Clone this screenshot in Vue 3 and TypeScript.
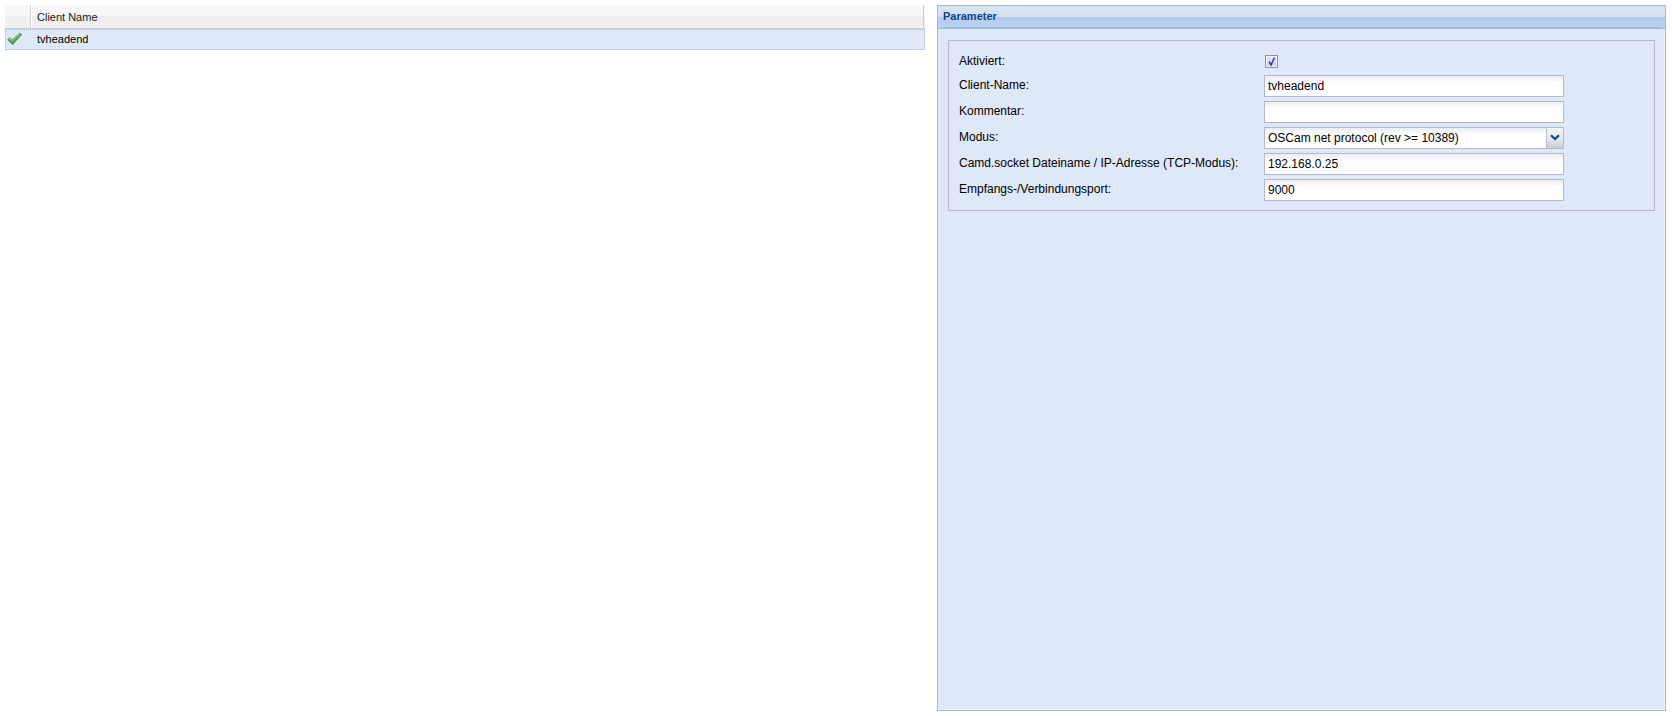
<script setup lang="ts">
interface Field {
  label: string
  value: string
  select?: boolean
}
const fields: Field[] = [
  { label: 'Client-Name:', value: 'tvheadend' },
  { label: 'Kommentar:', value: '' },
  { label: 'Modus:', value: 'OSCam net protocol (rev >= 10389)', select: true },
  { label: 'Camd.socket Dateiname / IP-Adresse (TCP-Modus):', value: '192.168.0.25' },
  { label: 'Empfangs-/Verbindungsport:', value: '9000' },
]
</script>

<template>
  <div class="page">
    <section class="grid">
      <div class="grid-head">
        <div class="hcell first"></div>
        <div class="hcell name">Client Name</div>
        <div class="hcell last"></div>
      </div>
      <div class="grid-row">
        <div class="icon-cell">
          <svg width="15" height="14" viewBox="0 0 16 15">
            <path d="M0.6 8.2 L3 6.2 L5.6 8.4 L13.4 1.4 L15.6 2.8 L6 13.6 Z" fill="#4fa651" stroke="#3d8f46" stroke-width="0.8" stroke-linejoin="round" />
            <path d="M2.2 7.8 L3 7.2 L5.6 9.4 L13.4 2.4" fill="none" stroke="#a9dfa5" stroke-width="1" />
          </svg>
        </div>
        <div class="name-cell">tvheadend</div>
      </div>
    </section>

    <section class="panel">
      <header class="panel-head">
        <div class="panel-head-inner">
          <span class="panel-title">Parameter</span>
        </div>
      </header>
      <div class="panel-body">
        <div class="fieldset">
          <div class="row check-row">
            <label class="lbl">Aktiviert:</label>
            <span class="check">
              <svg width="13" height="13" viewBox="0 0 13 13">
                <path d="M4 6.5 L6 10 L9.5 2.5" fill="none" stroke="#2f45b0" stroke-width="1.6" />
              </svg>
            </span>
          </div>
          <div v-for="f in fields" :key="f.label" class="row">
            <label class="lbl">{{ f.label }}</label>
            <div class="input" :class="{ 'has-trigger': f.select }">
              <span class="val">{{ f.value }}</span>
              <span v-if="f.select" class="trigger">
                <svg width="10" height="7" viewBox="0 0 10 7">
                  <path d="M1 1.2 L5 5 L9 1.2" fill="none" stroke="#15428b" stroke-width="2.2" />
                </svg>
              </span>
            </div>
          </div>
        </div>
      </div>
    </section>
  </div>
</template>

<style>
html, body { margin: 0; background: #fff; }
</style>

<style scoped>
.page {
  display: flex;
  gap: 12px;
  height: 716px;
  box-sizing: border-box;
  padding: 5px 6px 5px 5px;
  font: 12px/14px "Liberation Sans", Arial, sans-serif;
  color: #000;
  overflow: hidden;
}
.grid { width: 920px; flex: none; font-size: 11px; }
.grid-head {
  display: flex;
  height: 24px;
  box-sizing: border-box;
  background: linear-gradient(#f9f9f9 0%, #f7f7f7 45%, #eeeeee 50%, #f1f1f1 100%);
  border-bottom: 1px solid #d0d0d0;
}
.hcell { box-sizing: border-box; height: 23px; border-right: 1px solid #d0d0d0; }
.hcell.first { width: 26px; }
.hcell.name { width: 893px; padding: 6px 0 0 6px; color: #222; line-height: 13px; box-shadow: inset 1px 0 0 #fff; }
.hcell.last { flex: 1; border-right: 0; }
.grid-row {
  display: flex;
  height: 21px;
  box-sizing: border-box;
  background: #dfe8f6;
  border: 1px dotted #a3bae9;
}
.icon-cell { width: 25px; height: 19px; padding: 2px 0 0 1px; box-sizing: border-box; }
.icon-cell svg { display: block; }
.name-cell { padding: 2px 0 0 6px; line-height: 14px; }

.panel {
  width: 729px;
  flex: none;
  box-sizing: border-box;
  display: flex;
  flex-direction: column;
  border: 1px solid #99bbe8;
  background: #dfe8f6;
}
.panel-head {
  height: 23px;
  flex: none;
  box-sizing: border-box;
  border-bottom: 1px solid #99bbe8;
  background: linear-gradient(#dae6f4 0%, #d1dff0 50%, #b5cdec 50%, #b9d0ee 100%);
}
.panel-head-inner {
  height: 22px;
  box-sizing: border-box;
  margin: 0 4px 0 5px;
  padding-top: 4px;
  border-bottom: 1px solid #99bbe8;
}
.panel-title {
  display: block;
  font-weight: bold;
  font-size: 11px;
  line-height: 13px;
  color: #15428b;
}
.panel-body {
  flex: 1;
  padding: 11px 9px 0 10px;
  border-right: 1px solid #eef3fb;
  border-bottom: 1px solid #eef3fb;
}
.fieldset {
  box-sizing: border-box;
  height: 171px;
  border: 1px solid #b5b8c8;
  padding: 8px 0 0 10px;
}
.row {
  display: flex;
  align-items: flex-start;
  height: 26px;
}
.lbl {
  width: 305px;
  flex: none;
  padding-top: 3px;
  line-height: 14px;
}
.check-row .lbl { padding-top: 5px; }
.check {
  box-sizing: border-box;
  width: 13px;
  height: 13px;
  margin: 6px 0 0 1px;
  background: linear-gradient(#e6e8ee, #d0d4df);
  border: 1px solid #8f95a8;
  box-shadow: inset 0 0 0 1px #eef1f6;
  display: block;
  position: relative;
}
.check svg { position: absolute; left: -1px; top: -1px; }
.input {
  box-sizing: border-box;
  width: 300px;
  height: 22px;
  border: 1px solid #b5b8c8;
  background: #fff linear-gradient(#e9edf3, #fff 7px);
  padding: 3px 3px 0;
  line-height: 14px;
  position: relative;
  color: #000;
}
.input.has-trigger { padding-right: 20px; }
.trigger {
  position: absolute;
  right: 0;
  top: 0;
  width: 17px;
  height: 20px;
  box-sizing: border-box;
  border-left: 1px solid #b5b8c8;
  background: linear-gradient(#f2f4f7 0%, #e6e9ee 50%, #c9cdd3 100%);
  display: flex;
  align-items: center;
  justify-content: center;
}
.trigger svg { margin-top: -1px; }
</style>
